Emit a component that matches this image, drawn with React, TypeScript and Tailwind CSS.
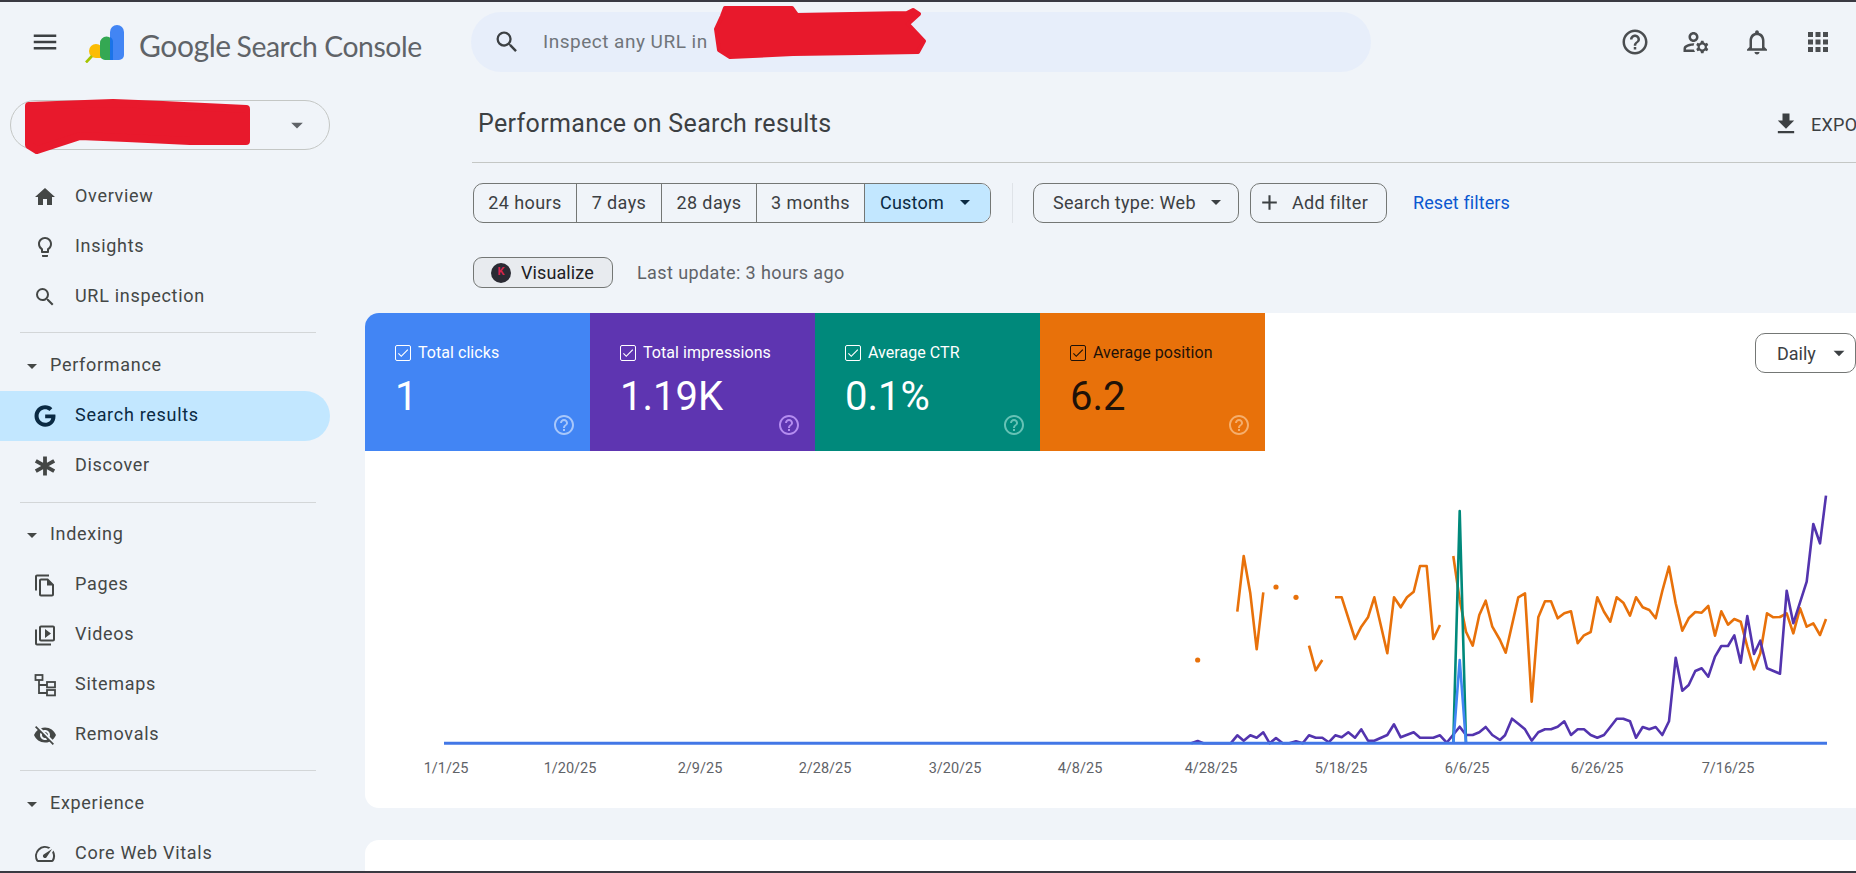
import {
  MdAdd,
  MdApps,
  MdArrowDropDown,
  MdCheck,
  MdFileDownload,
  MdHelpOutline,
  MdHome,
  MdMenu,
  MdOutlineFileCopy,
  MdOutlineLightbulb,
  MdOutlineManageAccounts,
  MdOutlineNotifications,
  MdOutlineVideoLibrary,
  MdVisibilityOff,
  MdSearch,
  MdSpeed,
} from 'react-icons/md';
import { FaGoogle } from 'react-icons/fa';
import type { ReactNode } from 'react';

type Pt = [number, number];

// chart origin on the page
const OX = 365;
const OY = 451;

const a = (pts: Pt[]): Pt[] => pts.map(([x, y]) => [1160 + x / 3 - OX, 480 + y / 3 - OY]);
const b = (pts: Pt[]): Pt[] => pts.map(([x, y]) => [1500 + x / 3 - OX, 480 + y / 3 - OY]);
const line = (pts: Pt[]) => pts.map(([x, y]) => `${x.toFixed(1)},${y.toFixed(1)}`).join(' ');

const orangeSegments: Pt[][] = [
  a([[232, 395], [251, 228], [271, 340], [290, 508], [310, 337]]),
  a([[447, 497], [467, 571], [487, 540]]),
  a([[525, 352], [545, 352], [585, 477], [604, 440], [624, 412], [643, 352], [682, 520], [702, 352], [722, 382], [741, 352], [761, 335], [780, 258], [800, 258], [820, 477], [840, 435]]),
  [
    ...a([[880, 228], [899, 360], [918, 455], [938, 497], [958, 405], [977, 362], [997, 440]]),
    ...b([[0, 480], [17, 518], [55, 352], [75, 340], [95, 665], [115, 412], [135, 364], [153, 364], [173, 415], [193, 400], [213, 394], [233, 490], [252, 466], [272, 456], [292, 352], [312, 395], [331, 425], [350, 352], [370, 368], [390, 407], [408, 352], [428, 382], [448, 390], [467, 415], [487, 333], [507, 260], [527, 370], [547, 452], [566, 415], [586, 396], [605, 398], [625, 378], [645, 467], [664, 394], [684, 434], [703, 417], [722, 425], [742, 500], [762, 568], [781, 520], [801, 400], [820, 412], [840, 411], [860, 400], [880, 460], [900, 385], [920, 440], [940, 430], [960, 465], [978, 417]]),
  ],
];

const orangeDots = a([[113, 540], [348, 321], [408, 352]]);

const purple: Pt[] = [
  ...a([[94, 790], [113, 783], [130, 790], [212, 790], [232, 766], [251, 782], [271, 766], [290, 773], [310, 757], [329, 790], [348, 774], [368, 790], [388, 790], [408, 784], [428, 790], [447, 766], [467, 773], [487, 773], [506, 787], [526, 766], [545, 772], [565, 757], [585, 773], [604, 748], [624, 782], [643, 782], [682, 765], [702, 733], [722, 772], [761, 757], [780, 773], [820, 773], [840, 766], [860, 788], [899, 740], [918, 765], [938, 765], [958, 757], [977, 741], [997, 765]]),
  ...b([[0, 780], [15, 766], [36, 716], [55, 731], [75, 748], [95, 782], [115, 757], [135, 748], [153, 748], [173, 740], [193, 724], [213, 765], [233, 748], [252, 748], [272, 765], [292, 773], [312, 765], [331, 741], [350, 716], [370, 716], [390, 724], [408, 773], [428, 741], [448, 748], [467, 741], [487, 765], [507, 724], [527, 533], [547, 632], [566, 615], [586, 573], [605, 565], [625, 590], [645, 530], [664, 498], [684, 498], [703, 466], [722, 548], [742, 408], [762, 522], [781, 482], [801, 565], [840, 581], [860, 332], [880, 430], [920, 305], [940, 132], [960, 190], [978, 47]]),
];

const greenSpike = a([[880, 790], [899, 93], [918, 790]]);
const blueSpike = a([[880, 790], [899, 540], [918, 790]]);
const baseY = 743.3 - OY;

const axisLabels: [string, number][] = [
  ['1/1/25', 446],
  ['1/20/25', 570],
  ['2/9/25', 700],
  ['2/28/25', 825],
  ['3/20/25', 955],
  ['4/8/25', 1080],
  ['4/28/25', 1211],
  ['5/18/25', 1341],
  ['6/6/25', 1467],
  ['6/26/25', 1597],
  ['7/16/25', 1728],
];

const metrics = [
  { label: 'Total clicks', value: '1', bg: 'bg-[#4285f4]', fg: 'text-white', help: 'text-[#a8c7fa]' },
  { label: 'Total impressions', value: '1.19K', bg: 'bg-[#5e35b1]', fg: 'text-white', help: 'text-[#b48cf0]' },
  { label: 'Average CTR', value: '0.1%', bg: 'bg-[#00897b]', fg: 'text-white', help: 'text-[#66c2b5]' },
  { label: 'Average position', value: '6.2', bg: 'bg-[#e8710a]', fg: 'text-[#1f1208]', help: 'text-[#f5ae6c]' },
];

const DiscoverIcon = () => (
  <svg viewBox="0 0 24 24" className="size-6" fill="none" stroke="currentColor" strokeWidth="3.8">
    <path d="M12 2.5v19M2.8 6.8l18.4 10.4M21.2 6.8L2.8 17.2" />
  </svg>
);

const SitemapIcon = () => (
  <svg viewBox="0 0 24 24" className="size-6" fill="none" stroke="currentColor" strokeWidth="1.8">
    <rect x="2.5" y="2" width="7" height="5" />
    <rect x="14" y="9" width="8" height="5.4" />
    <rect x="14" y="17" width="8" height="5.4" />
    <path d="M6 7v13h8M6 12h8" />
  </svg>
);

const NavItem = ({ icon, label, active }: { icon: ReactNode; label: string; active?: boolean }) => (
  <div
    className={`flex h-[50px] w-[330px] items-center rounded-r-full pl-[33px] ${active ? 'bg-[#c2e7ff] text-[#0a2a43]' : 'text-[#444746]'}`}
  >
    <span className="flex w-[24px] justify-center">{icon}</span>
    <span className="ml-[18px] pb-[3px] text-[18px] tracking-[0.7px]">{label}</span>
  </div>
);

const NavSection = ({ title }: { title: string }) => (
  <div className="flex h-[50px] items-center pl-[20px] text-[#444746]">
    <MdArrowDropDown className="size-6 shrink-0" />
    <span className="ml-[6px] pb-[3px] text-[18px] tracking-[0.7px]">{title}</span>
  </div>
);

const Divider = () => <div className="ml-[20px] h-px w-[296px] bg-[#d3d6d8]" />;

const Segment = ({ label, className }: { label: string; className: string }) => (
  <div className={`flex items-center justify-center border-r border-[#747775] pb-[2px] text-[18px] tracking-[0.4px] text-[#3c4043] ${className}`}>
    {label}
  </div>
);

export default function App() {
  return (
    <div
      className="relative flex h-[873px] w-[1856px] flex-col overflow-hidden border-y-2 border-[#3a3a42] bg-[#f0f4f9]"
      style={{ fontFamily: 'Roboto, sans-serif' }}
    >
      {/* top bar */}
      <header className="flex h-[84px] shrink-0 items-center pb-[4px]">
        <MdMenu className="ml-[30px] size-[30px] text-[#3c4043]" />
        <svg viewBox="0 0 40 38" className="ml-[25px] mt-[4px] h-[38px] w-[40px]">
          <circle cx="11" cy="26" r="7" fill="#fbbc04" />
          <path d="M11 26 H18 V33 H11 Z" fill="#fbbc04" />
          <path d="M1 37.5 L7 31" stroke="#a5c400" strokeWidth="2.6" fill="none" />
          <path d="M15 18 A6.5 6.5 0 0 1 28 18 V35 H20 A5 5 0 0 1 15 30 Z" fill="#34a853" />
          <path d="M25 7 A7 7 0 0 1 39 7 V30 A5 5 0 0 1 34 35 H25 Z" fill="#4285f4" />
          <path d="M25 12 A6 6 0 0 1 28 18 V35 H25 Z" fill="#1a73e8" />
        </svg>
        <span className="ml-[14px] mt-[7px] w-[298px] whitespace-nowrap tracking-[-0.4px] text-[#5f6368]" style={{ fontFamily: 'Lato, sans-serif' }}>
          <span className="text-[30px]">Google</span> <span className="ml-[2px] text-[28.3px]">Search Console</span>
        </span>
        <div className="ml-[34px] flex h-[60px] w-[900px] items-center rounded-full bg-[#e7eefa] pl-[22px]">
          <MdSearch className="size-[28px] text-[#3c4043]" />
          <span className="ml-[22px] text-[19px] tracking-[0.5px] text-[#70757a]">Inspect any URL in</span>
        </div>
        <div className="ml-auto flex items-center gap-[31px] pr-[23px] text-[#4a4d50]">
          <MdHelpOutline className="size-[30px]" />
          <MdOutlineManageAccounts className="size-[30px]" />
          <MdOutlineNotifications className="size-[30px]" />
          <MdApps className="size-[30px]" />
        </div>
      </header>

      <div className="flex min-h-0 flex-1">
        {/* sidebar */}
        <aside className="w-[365px] shrink-0">
          <div className="ml-[10px] mt-[14px] flex h-[50px] w-[320px] items-center justify-end rounded-full border border-[#c4c7c5] pr-[18px]">
            <MdArrowDropDown className="size-7 text-[#5f6368]" />
          </div>
          <div className="mt-[22px]">
            <NavItem icon={<MdHome className="size-[26px]" />} label="Overview" />
            <NavItem icon={<MdOutlineLightbulb className="size-[26px]" />} label="Insights" />
            <NavItem icon={<MdSearch className="size-[26px]" />} label="URL inspection" />
          </div>
          <div className="mt-[10px]">
            <Divider />
          </div>
          <div className="mt-[8px]">
            <NavSection title="Performance" />
            <NavItem icon={<FaGoogle className="size-[22px]" />} label="Search results" active />
            <NavItem icon={<DiscoverIcon />} label="Discover" />
          </div>
          <div className="mt-[11px]">
            <Divider />
          </div>
          <div className="mt-[7px]">
            <NavSection title="Indexing" />
            <NavItem icon={<MdOutlineFileCopy className="size-[25px]" />} label="Pages" />
            <NavItem icon={<MdOutlineVideoLibrary className="size-[25px]" />} label="Videos" />
            <NavItem icon={<SitemapIcon />} label="Sitemaps" />
            <NavItem icon={<MdVisibilityOff className="size-[26px]" />} label="Removals" />
          </div>
          <div className="mt-[10px]">
            <Divider />
          </div>
          <div className="mt-[8px]">
            <NavSection title="Experience" />
            <NavItem icon={<MdSpeed className="size-[26px]" />} label="Core Web Vitals" />
          </div>
        </aside>

        {/* main column */}
        <main className="min-w-0 flex-1">
          <div className="ml-[107px] flex h-[77px] items-center border-b border-[#c4c7c5] pl-[6px]">
            <h1 className="text-[25px] tracking-[0.35px] text-[#3c4043]">Performance on Search results</h1>
            <div className="ml-auto flex items-center overflow-hidden text-[#3c4043]">
              <MdFileDownload className="mr-[11px] size-[28px]" />
              <span className="w-[45px] overflow-hidden whitespace-nowrap text-[18px] tracking-[0.3px]">EXPORT</span>
            </div>
          </div>

          <div className="ml-[108px] mt-[20px] flex h-[40px] items-stretch">
            <div className="flex w-[518px] overflow-hidden rounded-[10px] border border-[#747775]">
              <Segment label="24 hours" className="w-[103px]" />
              <Segment label="7 days" className="w-[85px]" />
              <Segment label="28 days" className="w-[95px]" />
              <Segment label="3 months" className="w-[108px]" />
              <div className="flex flex-1 items-center bg-[#c2e7ff] pb-[2px] pl-[15px] text-[18px] tracking-[0.2px] text-[#0a2a43]">
                Custom
                <MdArrowDropDown className="ml-[9px] size-[24px]" />
              </div>
            </div>
            <div className="ml-[21px] w-px bg-[#dfe3e8]" />
            <div className="ml-[20px] flex w-[206px] items-center rounded-[10px] border border-[#747775] pb-[2px] pl-[19px] text-[18px] tracking-[0.3px] text-[#3c4043]">
              Search type: Web
              <MdArrowDropDown className="ml-[8px] size-[24px]" />
            </div>
            <div className="ml-[11px] flex w-[137px] items-center rounded-[10px] border border-[#747775] pb-[2px] pl-[6px] text-[18px] tracking-[0.3px] text-[#3c4043]">
              <MdAdd className="mr-[10px] size-[25px]" />
              Add filter
            </div>
            <span className="ml-[26px] self-center pb-[2px] text-[18px] tracking-[0.1px] text-[#0b57d0]">Reset filters</span>
          </div>

          <div className="ml-[108px] mt-[34px] flex h-[31px] items-center">
            <div className="flex h-full w-[140px] items-center rounded-[9px] border border-[#747775] bg-[#e8ebef] pl-[17px] text-[18px] tracking-[0.1px] text-[#202124]">
              <span className="flex size-[20px] items-center justify-center rounded-full bg-[#2a2a33] text-[11px] font-bold text-[#d6254e]">K</span>
              <span className="ml-[10px]">Visualize</span>
            </div>
            <span className="ml-[24px] text-[18px] tracking-[0.4px] text-[#5f6368]">Last update: 3 hours ago</span>
          </div>

          {/* chart card */}
          <section className="mt-[25px] h-[495px] rounded-l-[14px] bg-white">
            <div className="flex h-[138px] overflow-hidden rounded-tl-[14px]">
              {metrics.map((m) => (
                <div key={m.label} className={`relative w-[225px] pl-[30px] pt-[28px] ${m.bg} ${m.fg}`}>
                  <div className="flex items-center text-[16px] tracking-[0.05px]">
                    <span className="flex size-[16px] items-center justify-center rounded-[2px] border border-current">
                      <MdCheck className="size-[14px]" />
                    </span>
                    <span className="ml-[7px]">{m.label}</span>
                  </div>
                  <div className="mt-[7px] text-[40px] leading-[50px]">{m.value}</div>
                  <MdHelpOutline className={`absolute bottom-[14px] right-[14px] size-[24px] ${m.help}`} />
                </div>
              ))}
              <div className="flex flex-1 justify-end pt-[20px]">
                <div className="flex h-[40px] w-[101px] items-center rounded-[10px] border border-[#747775] bg-white pl-[21px] text-[18px] text-[#3c4043]">
                  Daily
                  <MdArrowDropDown className="ml-[10px] size-[26px]" />
                </div>
              </div>
            </div>
            <svg className="block h-[357px] w-full" viewBox="0 0 1491 357" fill="none" strokeLinejoin="round">
              {orangeSegments.map((seg, i) => (
                <polyline key={i} points={line(seg)} stroke="#e8710a" strokeWidth="2.6" />
              ))}
              {orangeDots.map(([x, y], i) => (
                <circle key={i} cx={x} cy={y} r="2.6" fill="#e8710a" />
              ))}
              <polyline points={line(purple)} stroke="#5334ae" strokeWidth="2.6" />
              <polyline points={line(greenSpike)} stroke="#00897b" strokeWidth="2.6" />
              <polyline points={line(blueSpike)} stroke="#4285f4" strokeWidth="2.6" />
              <line x1={444 - OX} x2={1827 - OX} y1={baseY} y2={baseY} stroke="#4277e6" strokeWidth="3" />
              {axisLabels.map(([t, x]) => (
                <text key={t} x={x - OX} y={769 - OY + 4} textAnchor="middle" fontSize="14.5" fill="#5f6368">
                  {t}
                </text>
              ))}
            </svg>
          </section>

          <section className="mt-[32px] h-[40px] rounded-tl-[14px] bg-white" />
        </main>
      </div>

      {/* redaction scribbles over the property name and search field */}
      <svg className="absolute left-[24px] top-[94px] h-[58px] w-[230px]" viewBox="0 0 230 58">
        <path
          d="M5 10 L89 7 L139 9 L222 13 L222 45 L166 45 L103 42 L56 40 L13 54 L5 49 Z"
          fill="#e8192c"
          stroke="#e8192c"
          strokeLinejoin="round"
          strokeWidth="8"
        />
      </svg>
      <svg className="absolute left-[712px] top-[2px] h-[56px] w-[216px]" viewBox="0 0 216 56">
        <path
          d="M13 4 L80 4 L85 11 L195 9 L201 6 L207 10 L196 20 L212 37 L206 48 L148 49 L81 50 L18 53 L7 46 L4 25 L10 12 Z"
          fill="#e8192c"
          stroke="#e8192c"
          strokeLinejoin="round"
          strokeWidth="4"
        />
      </svg>
    </div>
  );
}
